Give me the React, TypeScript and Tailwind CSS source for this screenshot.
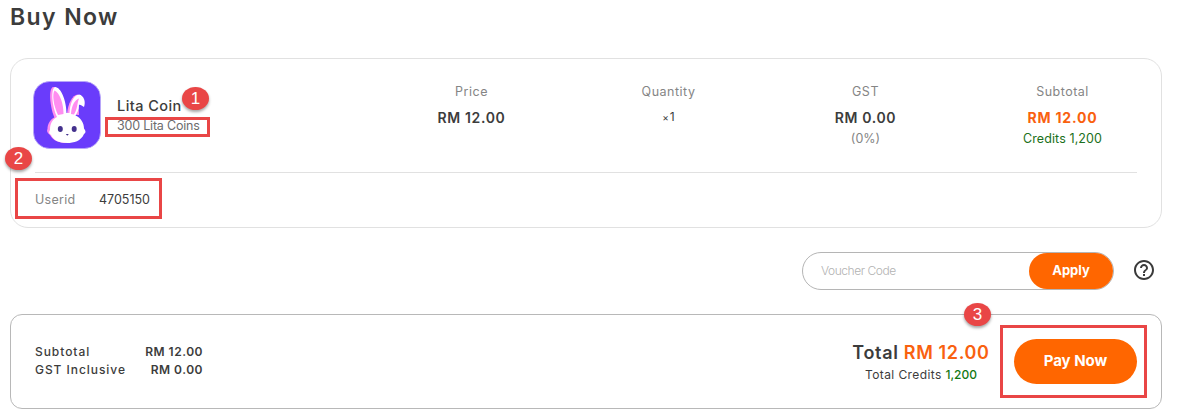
import type { ReactNode } from "react";

function RabbitLogo() {
  return (
    <svg viewBox="0 0 68 68" className="h-[68px] w-[68px] shrink-0">
      <rect x="0.5" y="0.5" width="67" height="67" rx="16" fill="#6a3cfb" stroke="#b9a8f8" strokeWidth="0.8" />
      <g fill="#ff8df0">
        <path d="M22 38C17 27 15 8 20 6C26 5 31 19 32 33Z" />
        <path d="M34 33C35 23 39 14 45 13.500L46 34Z" />
        <path d="M24 35C17 38 14.500 43 14.500 48C13 51 16 53 17 54C20 60 27 62 33 62Z" />
      </g>
      <path d="M24 36C19 25 17.500 8 22 6C28 6 33.500 20 33.500 32L36.500 32C37 23 40 14.500 46 13.500C51 14.500 53 21 51 26C49 25 47 23 46 24C46 29 44 32 42.500 34.500C48 37 51 42 51 47.500C53 50 53 52 51 53C48 60 41 62 34 62C26 62 20 59 18 54C16 53 15.500 51 17 49C17 43 19 38.500 24 36Z" fill="#fff" />
      <path d="M25 34C20.500 25 19 13 21.500 9.500C27 12 30.500 23 30.500 33Z" fill="#ff8df0" />
      <path d="M38 33C38.500 25 41.500 19 46 17.500C44 23 44.500 28 41 33.500Z" fill="#ff8df0" />
      <ellipse cx="27.300" cy="48" rx="2.500" ry="3" fill="#44318d" />
      <ellipse cx="41.200" cy="48" rx="2.500" ry="3" fill="#44318d" />
      <path d="M32.800 53H35.800L34.300 54.800Z" fill="#44318d" />
    </svg>
  );
}

function HelpIcon() {
  return (
    <svg viewBox="0 0 24 24" className="h-6 w-6 shrink-0" fill="#3a3a3a">
      <path d="M11 18h2v-2h-2v2zm1-16C6.480 2 2 6.480 2 12s4.480 10 10 10 10-4.480 10-10S17.520 2 12 2zm0 18c-4.410 0-8-3.590-8-8s3.590-8 8-8 8 3.590 8 8-3.590 8-8 8zm0-14c-2.210 0-4 1.790-4 4h2c0-1.100.9-2 2-2s2 .9 2 2c0 2-3 1.750-3 5h2c0-2.250 3-2.500 3-5 0-2.210-1.790-4-4-4z" />
    </svg>
  );
}

function Column({ label, children }: { label: string; children: ReactNode }) {
  return (
    <div className="flex w-[197px] flex-col items-center pt-[23px]">
      <span className="text-[12.5px] leading-5 tracking-[0.5px] text-[#858585]">{label}</span>
      {children}
    </div>
  );
}

// numbered callout that sits over the page
function Marker({ n, className }: { n: number; className: string }) {
  return (
    <span
      className={`absolute flex h-[23px] w-[27px] items-center justify-center rounded-[50%] bg-[#e94646] font-['Liberation_Sans'] text-[17px] leading-none text-white shadow-[0_2px_3px_rgba(0,0,0,0.35)] ${className}`}
    >
      {n}
    </span>
  );
}

function Outline({ className }: { className: string }) {
  return <span className={`pointer-events-none absolute border-3 border-[#e94646] ${className}`} />;
}

export default function App() {
  return (
    <main className="relative h-[411px] w-[1179px] overflow-hidden bg-white pl-2.5 font-['Inter',sans-serif] text-[#3c3c3c]">
      <h1 className="h-[58px] pt-px text-[23px] leading-8 font-semibold tracking-[1.4px]">Buy Now</h1>

      <section className="h-[170px] w-[1152px] rounded-[18px] border border-[#e1e1e1]">
        <div className="flex h-[113px]">
          <div className="flex w-[362px] items-start pt-[22px] pl-[22px]">
            <RabbitLogo />
            <div className="flex flex-col pt-[15px] pl-4">
              <span className="text-[14.5px] leading-5 font-medium tracking-[0.45px]">Lita Coin</span>
              <span className="text-[12.5px] leading-5 tracking-[-0.2px] text-[#6d6d6d]">300 Lita Coins</span>
            </div>
          </div>
          <Column label="Price">
            <span className="mt-[6px] text-sm leading-5 font-semibold tracking-[0.65px]">RM 12.00</span>
          </Column>
          <Column label="Quantity">
            <span className="mt-[5px] text-[12px] leading-5">
              <span className="mr-px text-[10px]">×</span>1
            </span>
          </Column>
          <Column label="GST">
            <span className="mt-[6px] text-sm leading-5 font-semibold tracking-[0.65px]">RM 0.00</span>
            <span className="text-[12.5px] leading-[22px] text-[#858585]">(0%)</span>
          </Column>
          <Column label="Subtotal">
            <span className="mt-[6px] text-sm leading-5 font-bold tracking-[0.8px] text-[#f9610f]">RM 12.00</span>
            <span className="text-[12.5px] leading-[22px] tracking-[0.1px] text-[#1b7020]">Credits 1,200</span>
          </Column>
        </div>
        <div className="mx-6 flex h-[55px] items-center border-t border-[#e1e1e1] text-[12.5px]">
          <span className="w-16 tracking-[0.3px] text-[#858585]">Userid</span>
          <span>4705150</span>
        </div>
      </section>

      <div className="mt-6 flex h-[38px] w-[1146px] items-center justify-end">
        <div className="flex h-[38px] w-[312px] items-center rounded-full border border-[#b5b5b5]">
          <input
            placeholder="Voucher Code"
            className="h-full w-[226px] bg-transparent pb-0.5 pl-[18px] text-xs font-light tracking-[-0.45px] outline-none placeholder:text-[#b2b2b2]"
          />
          <button className="h-9 w-[84px] rounded-full bg-[#ff6600] text-[13px] font-bold text-white">Apply</button>
        </div>
        <div className="ml-[18px] pb-0.5">
          <HelpIcon />
        </div>
      </div>

      <section className="mt-6 flex h-[95px] w-[1152px] items-center justify-between rounded-xl border border-[#b8b8b8] pr-6 pl-6">
        <dl className="grid w-[168px] grid-cols-[1fr_auto] pb-0.5 text-xs leading-[18px] font-medium">
          <dt className="tracking-[0.95px]">Subtotal</dt>
          <dd className="text-right font-semibold tracking-[0.5px]">RM 12.00</dd>
          <dt className="tracking-[0.95px]">GST Inclusive</dt>
          <dd className="text-right font-semibold tracking-[0.5px]">RM 0.00</dd>
        </dl>
        <div className="flex items-center">
          <div className="mr-6 flex w-[138px] flex-col items-center pt-0.5 whitespace-nowrap">
            <div className="text-lg leading-6 font-semibold tracking-[0.65px]">
              Total <span className="text-[#f9610f]">RM 12.00</span>
            </div>
            <div className="text-xs leading-5 tracking-[0.4px]">
              Total Credits <span className="font-medium tracking-normal text-[#137813]">1,200</span>
            </div>
          </div>
          <button className="h-[45px] w-[123px] rounded-full bg-[#ff6600] pb-px text-[15px] font-bold text-white">
            Pay Now
          </button>
        </div>
      </section>

      <Outline className="top-[117px] left-[105px] h-5 w-[105px]" />
      <Outline className="top-[178px] left-[15px] h-[41px] w-[147px]" />
      <Outline className="top-[325px] left-[1000px] h-[73px] w-[147px]" />
      <Marker n={1} className="top-[87px] left-[182px]" />
      <Marker n={2} className="top-[147px] left-[5px]" />
      <Marker n={3} className="top-[303px] left-[964px]" />
    </main>
  );
}
